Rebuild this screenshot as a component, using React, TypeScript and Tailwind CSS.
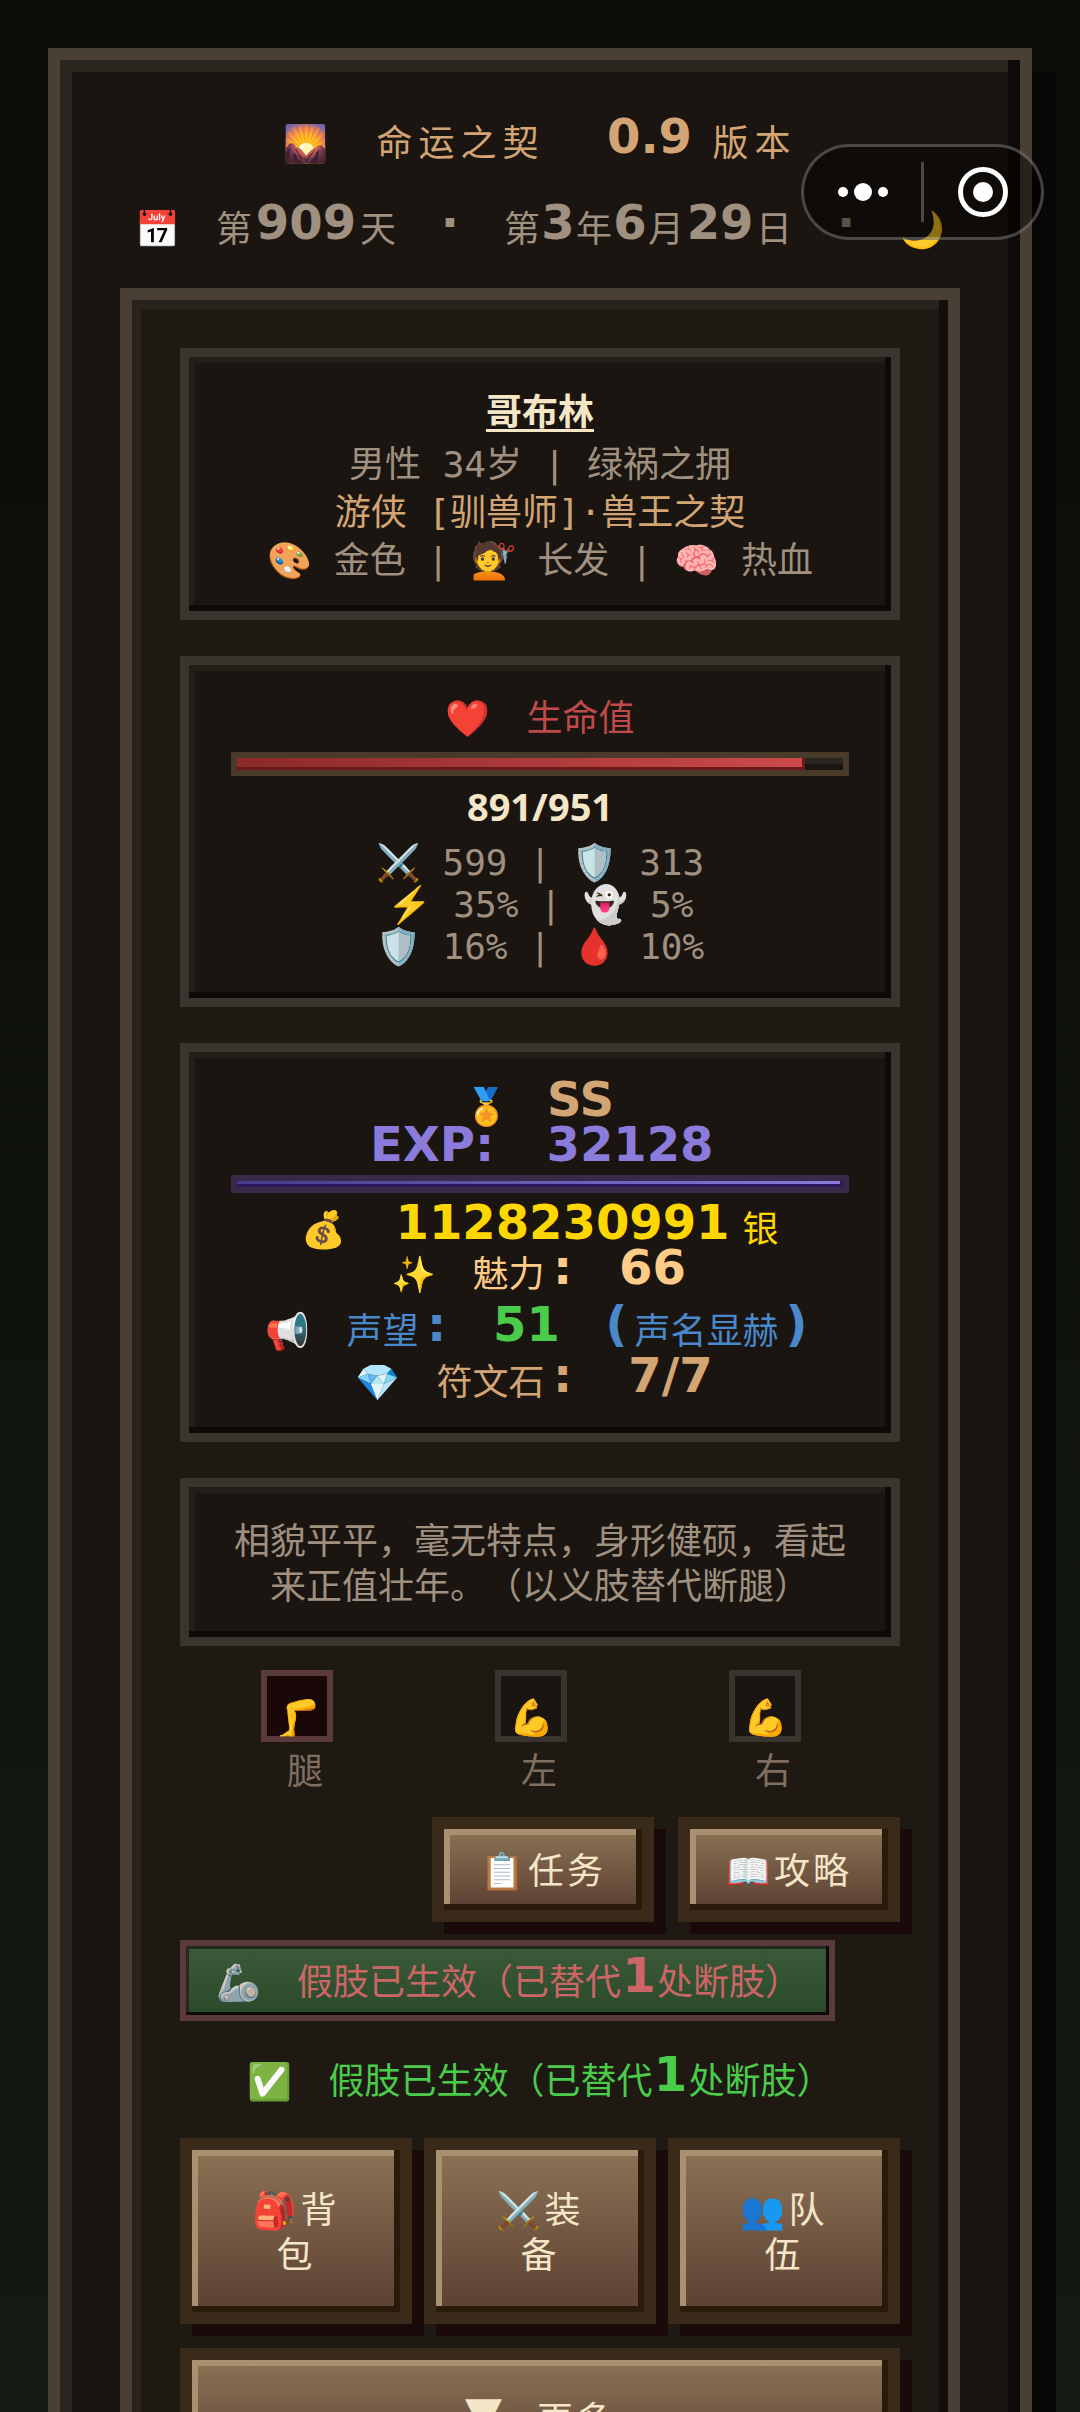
import React from 'react';

const PIXEL_CELL = 36;

type PixelProps = { children: string; cell?: number; className?: string };

// Wide bold glyphs sitting on a fixed cell grid, slightly above the CJK baseline
const Pixel: React.FC<PixelProps> = ({ children, cell = PIXEL_CELL, className = '' }) => (
    <span
        className={`inline-block h-6 text-center whitespace-nowrap align-[3px] tracking-normal leading-6 font-bold text-5xl font-['DejaVu_Sans'] ${className}`}
        style={{ width: children.length * cell }}
    >
        {children}
    </span>
);

const Gap: React.FC<{ className?: string }> = ({ className = 'w-9' }) => <span className={`inline-block ${className}`} />;

const Card: React.FC<{ children: React.ReactNode; className?: string }> = ({ children, className = '' }) => (
    <section
        className={`border-[9px] border-[#3a342e] bg-[#1a1510] px-[42px] text-center shadow-[inset_-6px_-6px_0_#0d0a07,inset_6px_6px_0_#231e18] ${className}`}
    >
        {children}
    </section>
);

const WoodButton: React.FC<{ children: React.ReactNode; className: string }> = ({ children, className }) => (
    <button
        type="button"
        className={`border-[12px] border-[#3a2a1a] bg-linear-to-b from-[#8b7355] to-[#5c4033] tracking-[3px] leading-[45px] text-[#f5e6c8] shadow-[inset_-6px_-6px_0_#2a1a0a,inset_6px_6px_0_#a89070,12px_12px_0_#1a0a0a] ${className}`}
    >
        {children}
    </button>
);

const limbs = [
    { icon: '🦵', name: '腿', box: 'border-[#5a3a3a] bg-[#1a0808]' },
    { icon: '💪', name: '左', box: 'border-[#3a342e] bg-[#1a1510]' },
    { icon: '💪', name: '右', box: 'border-[#3a342e] bg-[#1a1510]' },
];

const Capsule: React.FC = () => (
    <div className="absolute top-36 right-9 z-10 flex h-24 w-[243px] items-center rounded-full border-[3px] border-white/25 bg-black/45">
        <button type="button" aria-label="菜单" className="flex flex-1 items-center justify-center gap-1.5">
            <span className="h-2.5 w-2.5 rounded-full bg-white" />
            <span className="h-[18px] w-[18px] rounded-full bg-white" />
            <span className="h-2.5 w-2.5 rounded-full bg-white" />
        </button>
        <span className="h-[60px] w-[3px] bg-white/25" />
        <button type="button" aria-label="关闭" className="flex flex-1 items-center justify-center">
            <span className="flex h-[50px] w-[50px] items-center justify-center rounded-full border-[5px] border-white">
                <span className="h-5 w-5 rounded-full bg-white" />
            </span>
        </button>
    </div>
);

const App: React.FC = () => {
    const hp = 891;
    const maxHp = 951;

    return (
        <div className="relative h-screen overflow-hidden bg-linear-to-b from-[#0a0c07] to-[#141a12] p-12 text-4xl [text-spacing-trim:space-all] font-['DejaVu_Sans_Mono','Noto_Sans_CJK_SC',monospace]">
            <Capsule />
            <main className="border-[12px] border-[#4a3f35] bg-[#1a1510] px-12 pt-[60px] pb-12 shadow-[inset_-12px_-12px_0_#0d0a07,inset_12px_12px_0_#2a251f,24px_24px_0_#080705]">
                <header className="-mx-12 text-center leading-[48px] whitespace-nowrap">
                    <h1 className="h-12 tracking-[6px] text-[#d4a574]">
                        🌄<Gap className="w-[42px]" />命运之契<Gap className="w-[42px]" /><Pixel cell={42}>0.9</Pixel>版本
                    </h1>
                    <p className="mt-[38px] h-12 text-[#a09080]">
                        📅<Gap />第<Pixel>909</Pixel>天<Gap /><Pixel>·</Pixel><Gap />第<Pixel>3</Pixel>年<Pixel>6</Pixel>月<Pixel>29</Pixel>日<Gap /><Pixel>·</Pixel><Gap />🌙
                    </p>
                </header>

                <div className="mx-3 mt-[34px] border-[12px] border-[#4a3f35] bg-[#1e1912] p-12 shadow-[inset_-9px_-9px_0_#120e0a,inset_9px_9px_0_#28231d]">
                    <div className="flex flex-col gap-9">
                        <Card className="pt-8 pb-[26px] leading-[48px] text-[#a09080]">
                            <h2 className="mb-1 font-bold text-[#f5e6c8] underline decoration-[3px] underline-offset-4">哥布林</h2>
                            <p>男性 34岁 | 绿祸之拥</p>
                            <p className="text-[#d4a574]">游侠 [驯兽师]·兽王之契</p>
                            <p>🎨 金色 | 💇 长发 | 🧠 热血</p>
                        </Card>

                        <Card className="py-[30px]">
                            <h3 className="h-12 leading-[48px] text-[#c04a4a]">❤️<Gap />生命值</h3>
                            <div className="mt-[9px] h-6 border-[6px] border-[#4a3a2a] bg-[#1a1510] shadow-[inset_0_6px_0_#2a251f]">
                                <div
                                    className="h-3 bg-linear-to-r from-[#8b2a2a] to-[#cc4a4a] shadow-[inset_-3px_-3px_0_#6b1a1a]"
                                    style={{ width: `${(hp / maxHp) * 100}%` }}
                                />
                            </div>
                            <p className="mt-1.5 h-12 font-bold text-[38px] leading-[48px] text-[#f5e6c8] font-['Noto_Sans',sans-serif]">{hp}/{maxHp}</p>
                            <div className="mt-3 leading-[42px] text-[#a09080]">
                                <p className="h-[42px]">⚔️ 599 | 🛡️ 313</p>
                                <p className="h-[42px]">⚡️ 35% | 👻 5%</p>
                                <p className="h-[42px]">🛡️ 16% | 🩸 10%</p>
                            </div>
                        </Card>

                        <Card className="pt-8 pb-7 leading-[45px] whitespace-nowrap">
                            <p className="h-[45px] text-[#d4a574]">🏅<Gap /><Pixel>SS</Pixel></p>
                            <p className="h-[45px] text-[#8b7bdb]"><Pixel>EXP:</Pixel><Gap /><Pixel>32128</Pixel></p>
                            <div className="mt-px h-[18px] border-[6px] border-[#3a2a4a]">
                                <div className="h-1.5 bg-linear-to-r from-[#4a3a8b] to-[#8b7bdb] shadow-[inset_-3px_-3px_0_#2a1a5a]" />
                            </div>
                            <p className="mt-3.5 h-[45px] text-[#ffd700]">💰<Gap /><Pixel>1128230991</Pixel>银</p>
                            <p className="h-[45px] text-[#ffcc88]">✨<Gap />魅力<Pixel>:</Pixel><Gap /><Pixel>66</Pixel></p>
                            <p className="mt-3 -mx-9 h-[45px] text-[#4a88cc]">
                                📢<Gap />声望<Pixel>:</Pixel><Gap /><Pixel className="text-[#4acc4a]">51</Pixel><Gap /><Pixel>(</Pixel>声名显赫<Pixel>)</Pixel>
                            </p>
                            <p className="mt-1.5 h-[45px] text-[#d4a574]">💎<Gap />符文石<Pixel>:</Pixel><Gap /><Pixel>7/7</Pixel></p>
                        </Card>

                        <Card className="pt-8 pb-7 leading-[45px] text-[#a09080]">
                            <p>相貌平平，毫无特点，身形健硕，看起来正值壮年。（以义肢替代断腿）</p>
                        </Card>
                    </div>

                    <ul className="mt-6 grid grid-cols-3 pr-[18px] text-center leading-[48px]">
                        {limbs.map((limb) => (
                            <li key={limb.name}>
                                <div className={`mx-auto flex h-[72px] w-[72px] justify-center border-[6px] pt-[18px] ${limb.box}`}>{limb.icon}</div>
                                <p className="mt-1.5 pl-4 text-[#806f60]">{limb.name}</p>
                            </li>
                        ))}
                    </ul>

                    <div className="mt-[21px] flex justify-end gap-6 whitespace-nowrap">
                        <WoodButton className="px-9 pt-5 pb-4">📋任务</WoodButton>
                        <WoodButton className="px-9 pt-5 pb-4">📖攻略</WoodButton>
                    </div>

                    <p className="mt-[18px] h-[81px] w-fit border-[6px] border-[#5a3a3a] bg-linear-to-b from-[#3a5a3a] to-[#2a4a2a] pr-7 pl-[30px] pt-3.5 leading-[45px] whitespace-nowrap text-[#cc6666] shadow-[inset_-3px_-3px_0_#0d0a07,inset_3px_3px_0_#252a1f]">
                        🦾<Gap />假肢已生效（已替代<Pixel>1</Pixel>处断肢）
                    </p>
                    <p className="mt-[38px] h-[45px] text-center leading-[45px] whitespace-nowrap text-[#4acc4a]">
                        ✅<Gap />假肢已生效（已替代<Pixel>1</Pixel>处断肢）
                    </p>

                    <nav className="mt-[34px] grid grid-cols-3 gap-x-3 gap-y-6">
                        <WoodButton className="px-12 pt-[38px] pb-[34px]">🎒背包</WoodButton>
                        <WoodButton className="px-12 pt-[38px] pb-[34px]">⚔️装备</WoodButton>
                        <WoodButton className="px-12 pt-[38px] pb-[34px]">👥队伍</WoodButton>
                        <WoodButton className="col-span-3 pt-[38px] pb-[34px]"><Pixel>▼</Pixel><Gap />更多</WoodButton>
                    </nav>
                </div>
            </main>
        </div>
    );
};

export default App;
